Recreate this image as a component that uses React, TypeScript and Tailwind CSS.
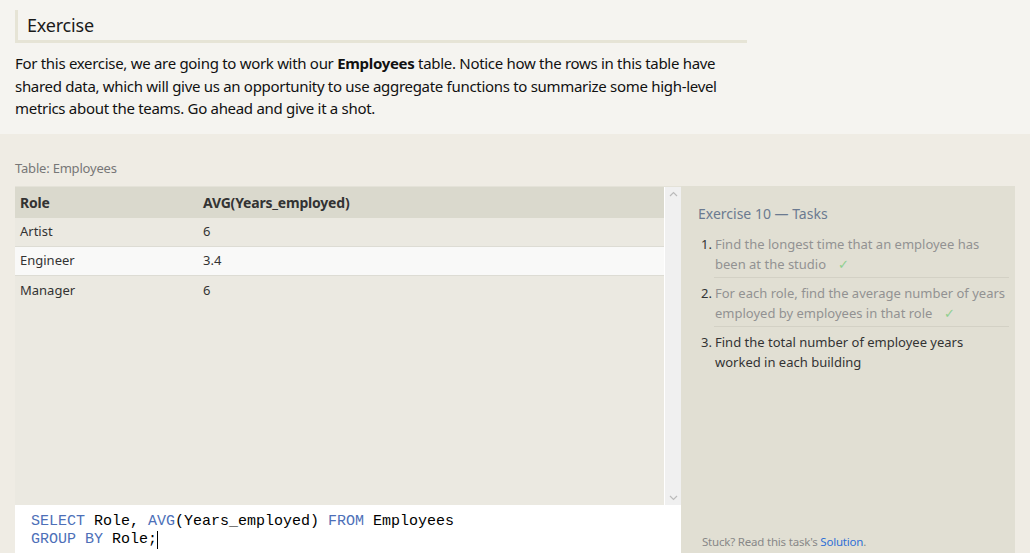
import React from "react";

const font = { fontFamily: '"Noto Sans", "Open Sans", sans-serif' };

const rows = [
  { role: "Artist", avg: "6" },
  { role: "Engineer", avg: "3.4" },
  { role: "Manager", avg: "6" },
];

const tasks = [
  { text: "Find the longest time that an employee has been at the studio", done: true },
  { text: "For each role, find the average number of years employed by employees in that role", done: true },
  { text: "Find the total number of employee years worked in each building", done: false },
];

function Check() {
  return <span className="ml-3 text-[#8fcf8f]">✓</span>;
}

export default function App() {
  return (
    <div className="w-[1030px] h-[553px] overflow-hidden bg-[#efece4] text-[#222]" style={font}>
      <div className="bg-[#f5f4f0] pt-[10px] pb-[14px] px-[15px] h-[134px]">
        <div className="w-[732px] border-l-[3px] border-b-[3px] border-[#e6e4d6] pl-[9px] h-[33px] flex items-center">
          <h2 className="text-[18px] text-[#1a1a1a] leading-none tracking-[-0.2px]">Exercise</h2>
        </div>
        <p className="mt-[9px] w-[720px] text-[15px] leading-[22.5px] tracking-[-0.3px] text-[#111]">
          For this exercise, we are going to work with our <b>Employees</b> table. Notice how the rows in this table have
          shared data, which will give us an opportunity to use aggregate functions to summarize some high-level
          metrics about the teams. Go ahead and give it a shot.
        </p>
      </div>

      <div className="px-[15px] pt-[28px]">
        <div className="text-[13px] text-[#777] leading-none h-[24px] tracking-[-0.2px]">Table: Employees</div>
        <div className="flex">
          <div className="w-[666px] flex flex-col">
            <div className="flex h-[319px] border-t border-[#e4e2d8]">
              <div className="flex-1 bg-[#ebe9e1]">
                <div className="flex h-[31px] items-center bg-[#dad9cd] text-[14px] font-bold text-[#333] tracking-[-0.2px]">
                  <div className="w-[188px] pl-[5px]">Role</div>
                  <div>AVG(Years_employed)</div>
                </div>
                {rows.map((r, i) => (
                  <div
                    key={r.role}
                    className={`flex h-[29px] items-center text-[13px] text-[#333] ${
                      i < 2 ? "border-b border-[#dddcd4]" : ""
                    } ${i === 1 ? "bg-[#f9f9f8]" : ""}`}
                  >
                    <div className="w-[188px] pl-[5px]">{r.role}</div>
                    <div>{r.avg}</div>
                  </div>
                ))}
              </div>
              <div className="w-[17px] bg-[#f0f0f0] border-l border-white flex flex-col items-center justify-between py-[4px]">
                <svg width="9" height="6" viewBox="0 0 9 6"><path d="M1 5 L4.5 1.5 L8 5" stroke="#bbb" strokeWidth="1.2" fill="none" /></svg>
                <svg width="9" height="6" viewBox="0 0 9 6"><path d="M1 1 L4.5 4.5 L8 1" stroke="#bbb" strokeWidth="1.2" fill="none" /></svg>
              </div>
            </div>
            <div
              className="bg-white h-[48px] pl-[16px] pt-[8px] text-[15px] leading-[18px] text-black"
              style={{ fontFamily: '"Liberation Mono", monospace' }}
            >
              <div>
                <span className="text-[#4d6fb8]">SELECT</span> Role, <span className="text-[#4d6fb8]">AVG</span>(Years_employed){" "}
                <span className="text-[#4d6fb8]">FROM</span> Employees
              </div>
              <div className="flex items-center">
                <span className="text-[#4d6fb8]">GROUP BY</span>&nbsp;Role;
                <span className="inline-block w-px h-[18px] bg-black" />
              </div>
            </div>
          </div>
          <div className="w-[334px] h-[367px] bg-[#e1dfd3] pl-[17px] pr-[6px] pt-[17px] flex flex-col">
            <div className="text-[14px] text-[#6b7a90]">Exercise 10 — Tasks</div>
            <ol className="mt-[10px] text-[13px] leading-[20px]">
              {tasks.map((t, i) => (
                <li key={i} className="flex">
                  <span className="w-[16px] shrink-0 text-right pr-[2px] text-[#333]">{i + 1}.</span>
                  <div
                    className={`flex-1 pl-[1px] pb-[3px] mb-[5px] ${
                      i < 2 ? "border-b border-[#d3d1c5] text-[#929292]" : "text-[#333]"
                    }`}
                  >
                    {t.text}
                    {t.done && <Check />}
                  </div>
                </li>
              ))}
            </ol>
            <div className="mt-auto mb-[3px] pl-[4px] text-[11.5px] text-[#888] tracking-[-0.2px]">
              Stuck? Read this task's <span className="text-[#2f6fd6]">Solution</span>.
            </div>
          </div>
        </div>
      </div>
    </div>
  );
}
